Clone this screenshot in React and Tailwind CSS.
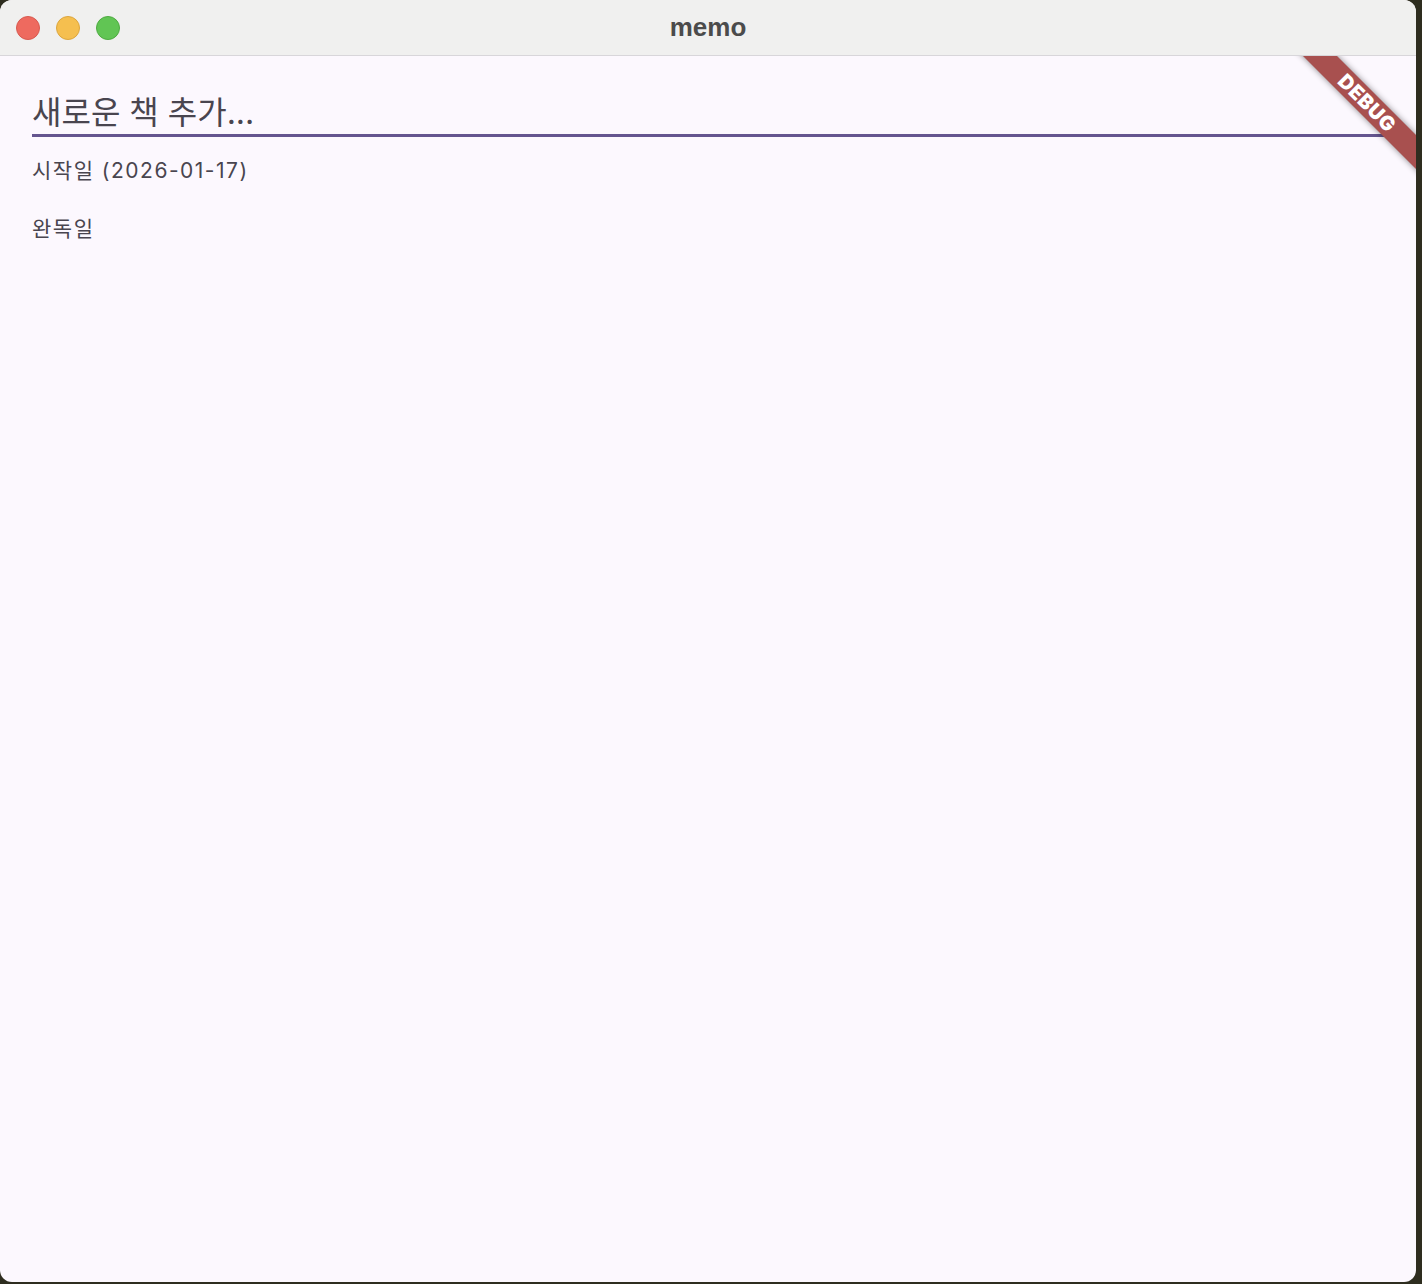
import React from "react";

function TrafficLights() {
  return (
    <div className="absolute left-[16px] top-[16px] flex gap-[16px]">
      <span className="w-[24px] h-[24px] rounded-full bg-[#ee6a5f] border border-[#d85a50]" />
      <span className="w-[24px] h-[24px] rounded-full bg-[#f5bf4f] border border-[#dca63e]" />
      <span className="w-[24px] h-[24px] rounded-full bg-[#61c554] border border-[#4eab41]" />
    </div>
  );
}

function DebugBanner() {
  return (
    <div className="absolute left-[1267px] top-[35px] w-[200px] h-[24px] rotate-45 bg-[#a8504f] shadow-[0_0_6px_rgba(0,0,0,0.45)] flex items-center justify-center">
      <span className="text-white font-black text-[20px] leading-none tracking-[0.5px] font-['Inter','Liberation_Sans',sans-serif]">
        DEBUG
      </span>
    </div>
  );
}

export default function App() {
  return (
    <div className="w-[1422px] h-[1284px] bg-[#2e2d1f] overflow-hidden">
      <div className="w-[1416px] h-[1282px] rounded-[12px] overflow-hidden flex flex-col bg-[#fcf8fe]">
        {/* title bar */}
        <div className="relative h-[56px] shrink-0 bg-[#f0f0ef] border-b border-[#d8d6da] flex items-center justify-center">
          <TrafficLights />
          <span className="text-[26px] font-bold text-[#4b4b4b] font-['Liberation_Sans',sans-serif]">memo</span>
        </div>

        {/* content */}
        <div className="relative flex-1 overflow-hidden px-[32px] pt-[36px] text-[#49454f] font-['Inter','Noto_Sans_CJK_KR',sans-serif]">
          <div className="border-b-[3px] border-[#65558f] pb-[1px]">
            <div className="text-[32px] leading-[41px]">새로운 책 추가...</div>
          </div>
          <div className="mt-[20px] text-[21px] leading-[28px] tracking-[1.5px]">시작일 (2026-01-17)</div>
          <div className="mt-[30px] text-[21px] leading-[28px] tracking-[1.5px]">완독일</div>
          <DebugBanner />
        </div>
      </div>
    </div>
  );
}
